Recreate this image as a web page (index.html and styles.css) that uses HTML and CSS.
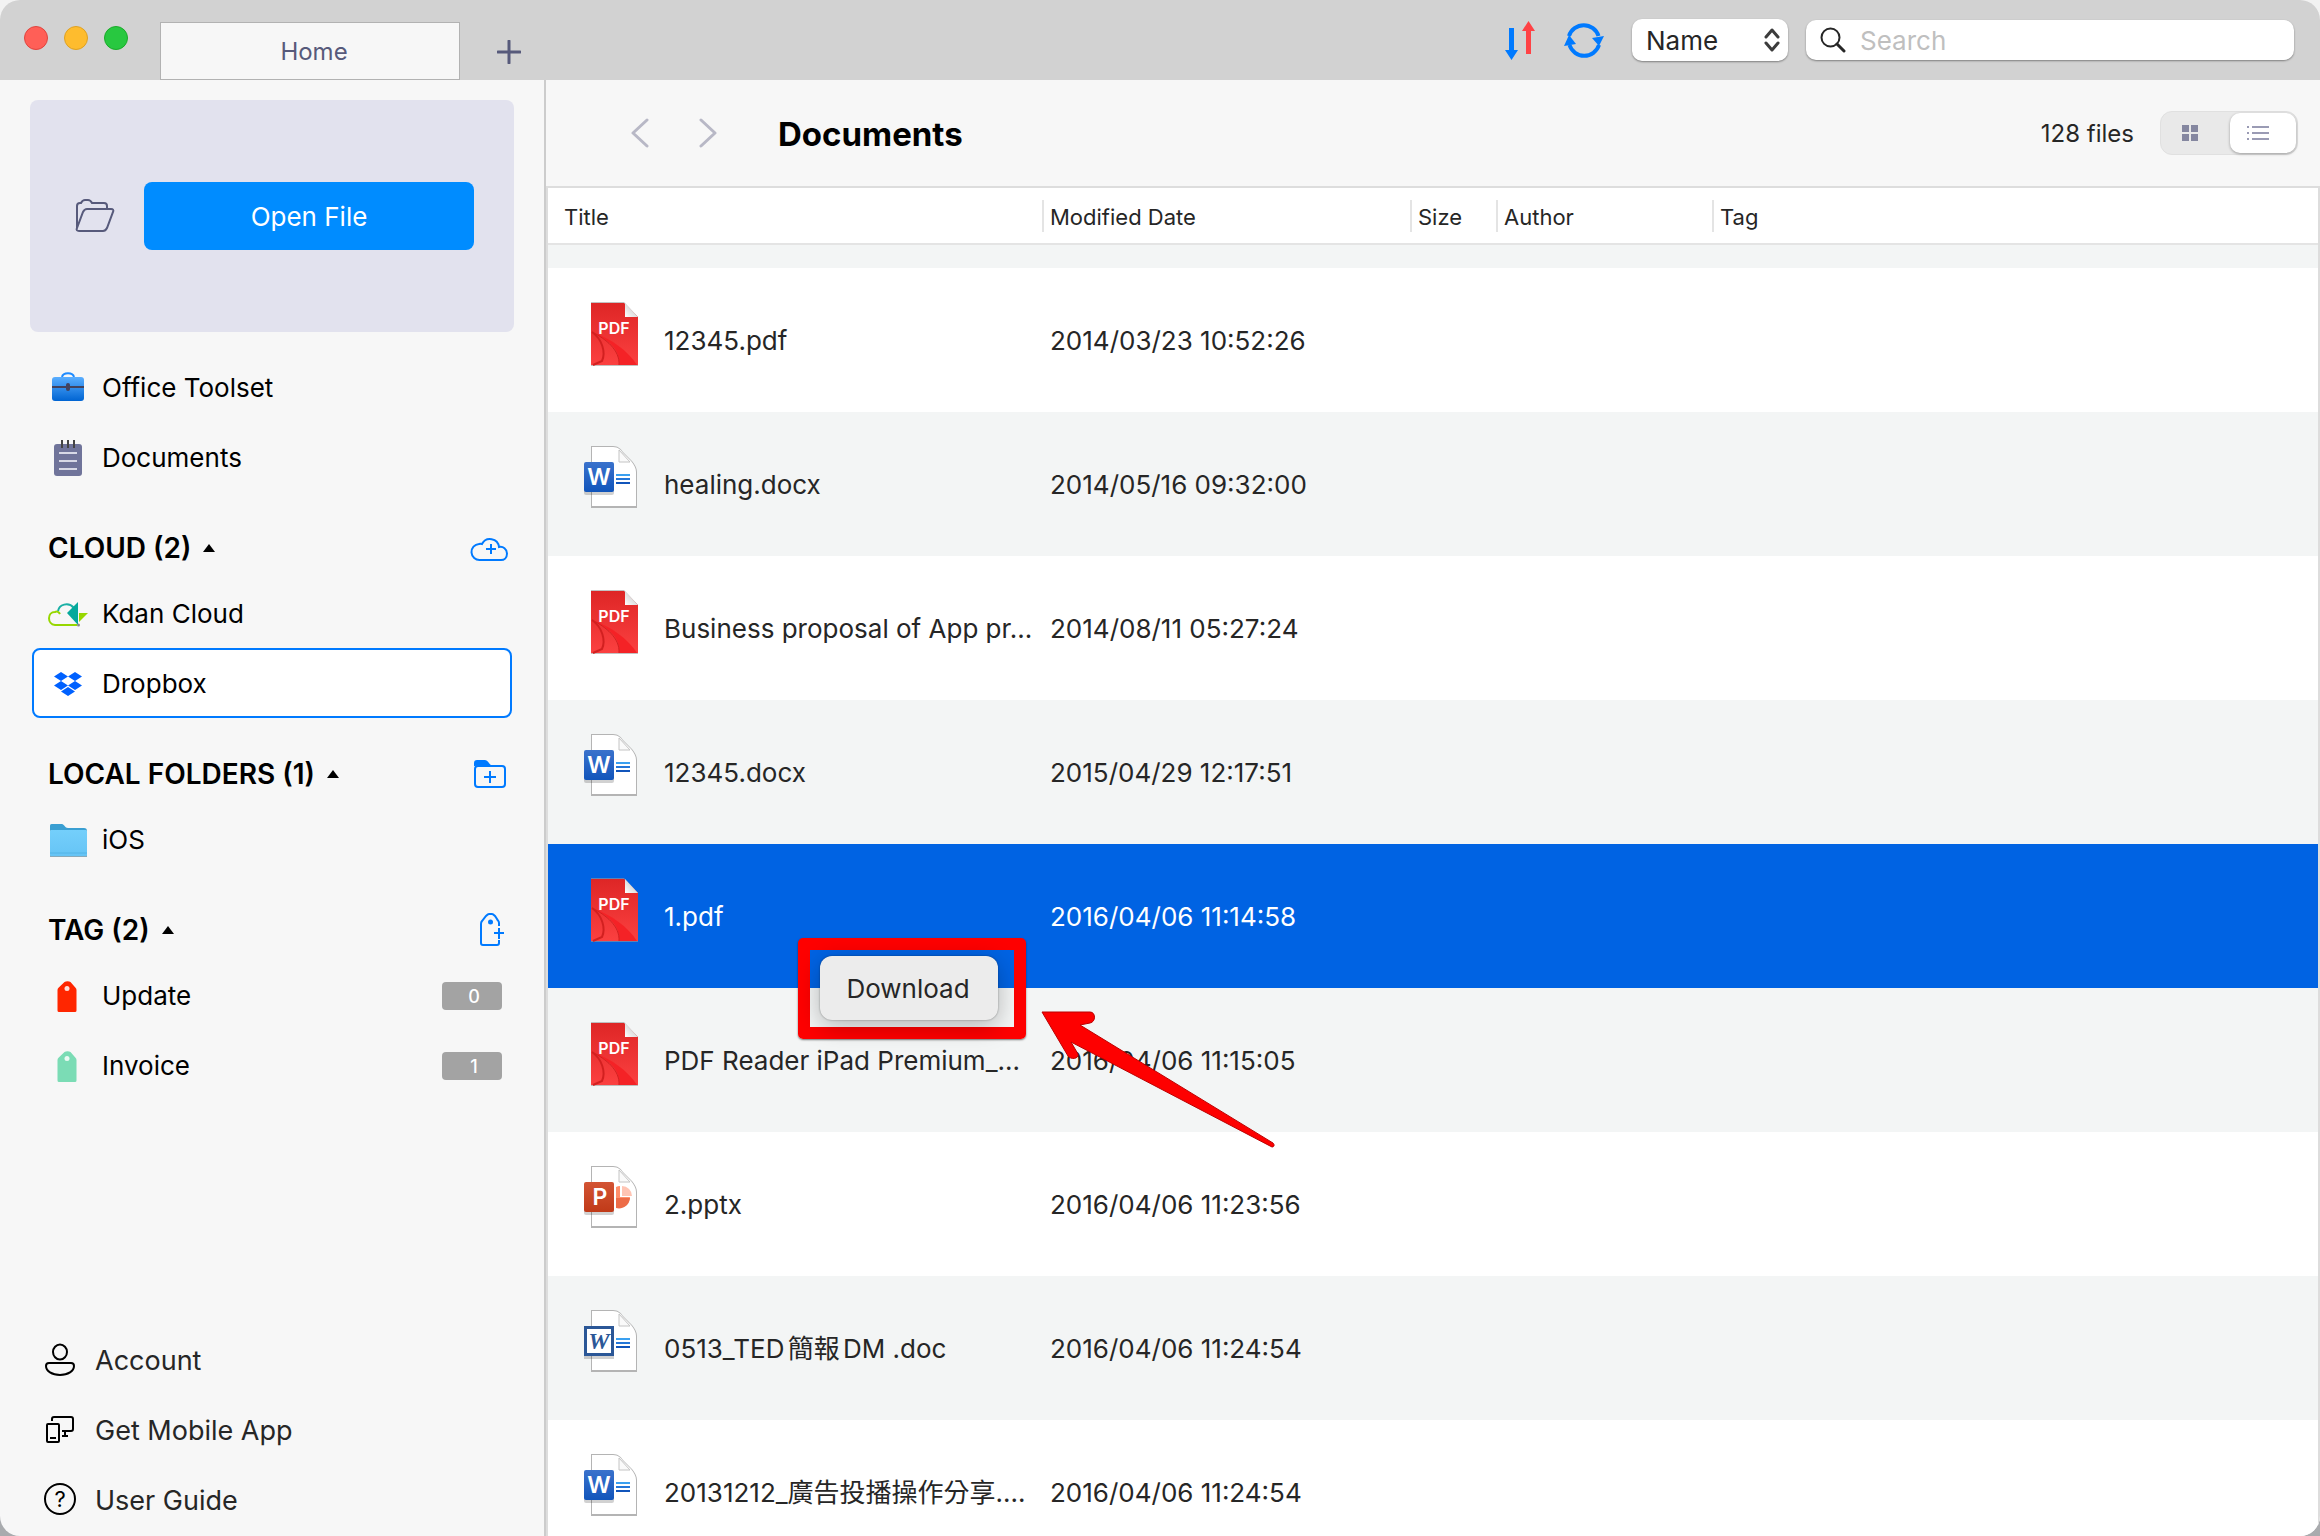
FILE: index.html
```html
<!DOCTYPE html>
<html lang="en">
<head>
<meta charset="utf-8">
<title>Documents</title>
<link rel="stylesheet" href="styles.css">
</head>
<body>
<svg class="defs" aria-hidden="true">
  <defs>
    <linearGradient id="g-case" x1="0" y1="0" x2="0" y2="1"><stop offset="0" stop-color="#5aaeff"/><stop offset="1" stop-color="#0064d2"/></linearGradient>
    <linearGradient id="g-pdf" x1="0" y1="0" x2="0" y2="1"><stop offset="0" stop-color="#de2626"/><stop offset="1" stop-color="#fb4040"/></linearGradient>
    <linearGradient id="g-word" x1="0" y1="0" x2="0" y2="1"><stop offset="0" stop-color="#3a72cc"/><stop offset="1" stop-color="#1155bb"/></linearGradient>
    <linearGradient id="g-ppt" x1="0" y1="0" x2="0" y2="1"><stop offset="0" stop-color="#d35434"/><stop offset="1" stop-color="#c03a18"/></linearGradient>
    <linearGradient id="g-folder" x1="0" y1="0" x2="0" y2="1"><stop offset="0" stop-color="#74cffb"/><stop offset="1" stop-color="#66c4f5"/></linearGradient>
    <linearGradient id="g-fold" x1="0" y1="1" x2="1" y2="0"><stop offset="0" stop-color="#fff"/><stop offset="1" stop-color="#bbb"/></linearGradient>
  </defs>
  <symbol id="i-pdf" viewBox="0 0 56 66">
    <path d="M9 1h33l14 15v49H9z" fill="#9a9a9a" opacity=".6"/>
    <path d="M9 2h33l14 14v48H9z" fill="url(#g-pdf)"/>
    <path d="M10 31c10 7 14 20 10 29l-9 4" fill="none" stroke="#d22020" stroke-width="2"/>
    <path d="M10 31c16 8 28 16 27 33h18C46 50 30 38 10 31z" fill="#f42226"/>
    <path d="M10 31c14 7 28 18 27 33" fill="none" stroke="#d22020" stroke-width="1"/>
    <path d="M43 2l13 14H43z" fill="url(#g-fold)"/>
  </symbol>
  <symbol id="i-page" viewBox="0 0 56 66">
    <path d="M9 2h22c5 0 8 3 10 6l9 9c3 4 5 7 5 11v36H9z" fill="#b4b4b4"/>
    <path d="M10 3h21c5 0 8 3 10 6l8 8c3 4 5 7 5 11v34H10z" fill="#fff"/>
    <path d="M37 6v12h11z" fill="#fafafa" stroke="#c4c4c4" stroke-width="1"/>
  </symbol>
  <symbol id="i-word" viewBox="0 1 56 66">
    <use href="#i-page"/>
    <rect x="2" y="20" width="30" height="31" rx="2" fill="#000" opacity=".18"/>
    <rect x="2" y="18" width="30" height="30" rx="2" fill="url(#g-word)"/>
    <path d="M34 31h14" stroke="#3aa0f0" stroke-width="2"/><path d="M34 35h14" stroke="#2477d8" stroke-width="2"/><path d="M34 39h14" stroke="#1155bb" stroke-width="2"/>
  </symbol>
  <symbol id="i-doc" viewBox="0 1 56 66">
    <use href="#i-page"/>
    <rect x="2" y="20" width="30" height="31" fill="#000" opacity=".18"/>
    <rect x="3.500" y="19.500" width="27" height="27" fill="#fff" stroke="#2b5797" stroke-width="3"/>
    <path d="M34 31h14" stroke="#3aa0f0" stroke-width="2"/><path d="M34 35h14" stroke="#2477d8" stroke-width="2"/><path d="M34 39h14" stroke="#1155bb" stroke-width="2"/>
  </symbol>
  <symbol id="i-ppt" viewBox="0 1 56 66">
    <use href="#i-page"/>
    <path d="M34 23a11 11 0 0 1 4-1v11h10A11 11 0 0 1 34 43z" fill="#ff8f6b"/>
    <path d="M34 34h14a11 11 0 0 1-14 10z" fill="#ed6c47"/>
    <path d="M40 22a10 10 0 0 1 10 10H40z" fill="#ffc4b3"/>
    <rect x="2" y="20" width="30" height="31" rx="2" fill="#000" opacity=".18"/>
    <rect x="2" y="18" width="30" height="30" rx="2" fill="url(#g-ppt)"/>
  </symbol>
  <symbol id="i-tag" viewBox="0 0 40 40">
    <path d="M11 36a1.500 1.500 0 0 1-1.500-1.500V14c0-1 .4-1.700 1-2.300l6-5.600c1.500-1.300 4.500-1.300 6 0l5 5.600c.6.600 1 1.300 1 2.300v20.500a1.500 1.500 0 0 1-1.500 1.500z" fill="currentColor"/>
    <circle cx="19" cy="12.500" r="2.500" fill="#fff" opacity=".85"/>
  </symbol>
</svg>

<div class="window">
  <header class="titlebar">
    <div class="lights">
      <button class="light light-close" aria-label="Close"></button>
      <button class="light light-min" aria-label="Minimize"></button>
      <button class="light light-max" aria-label="Zoom"></button>
    </div>
    <button class="tab">Home</button>
    <button class="icon-btn new-tab" aria-label="New tab">
      <svg width="24" height="24" viewBox="0 0 24 24"><path d="M12 1v22M1 12h22" stroke="#575a7b" stroke-width="3" stroke-linecap="round"/></svg>
    </button>
    <div class="tools">
      <button class="icon-btn" aria-label="Sort order">
        <svg width="32" height="40" viewBox="0 0 32 40"><path d="M5 8h5v22h4L7.500 40 1 30h4z" fill="#007aff"/><path d="M22 34h5V11h4L24.500 1 18 11h4z" fill="#ff4245"/></svg>
      </button>
      <button class="icon-btn" aria-label="Refresh">
        <svg width="40" height="40" viewBox="0 0 40 40"><path d="M5 16A15.500 15.500 0 0 1 34.500 16M35 25A15.500 15.500 0 0 1 5.500 25" fill="none" stroke="#007aff" stroke-width="4"/><path d="M28 18l12-2-5 10z" fill="#007aff"/><path d="M0 26l12-2-7-9z" fill="#007aff"/></svg>
      </button>
      <div class="sort">
        <select class="sort-select" aria-label="Sort by"><option>Name</option><option>Date</option></select>
        <svg class="sort-arrows" width="16" height="24" viewBox="0 0 16 24"><path d="M2 9l6-7 6 7M2 15l6 7 6-7" fill="none" stroke="#3c3c3c" stroke-width="3" stroke-linecap="round" stroke-linejoin="round"/></svg>
      </div>
      <label class="search">
        <svg width="26" height="26" viewBox="0 0 26 26"><circle cx="10.500" cy="10.500" r="9" fill="none" stroke="#262626" stroke-width="2"/><path d="M17 17l7 7" stroke="#262626" stroke-width="3" stroke-linecap="round"/></svg>
        <input class="search-input" type="text" placeholder="Search" aria-label="Search">
      </label>
    </div>
  </header>

  <div class="body">
    <aside class="sidebar">
      <div class="open-panel">
        <svg width="40" height="34" viewBox="0 0 40 34"><path d="M2 29V7c0-2 1-3 3-3h1c1-2 2-3 4-3h3c2 0 3 1 4 3h12c2 0 3 1 3 3v3M2 29L8 13c1-2 2-3 4-3h24c2 0 3 1 2 3l-6 16c-1 2-2 3-4 3H4c-2 0-3-1-2-3z" fill="none" stroke="#575a7b" stroke-width="2"/></svg>
        <button class="open-btn">Open File</button>
      </div>

      <nav class="group">
        <a class="item" href="#">
          <svg width="40" height="40" viewBox="0 0 40 40"><path d="M14 9c1-5 11-5 12 0" fill="none" stroke="#1e8bff" stroke-width="2"/><rect x="4" y="9" width="32" height="24" rx="3" fill="url(#g-case)"/><path d="M4 19h32" stroke="#42425e" stroke-width="2"/><rect x="18" y="15" width="4" height="8" rx="2" fill="#42425e"/></svg>
          <span>Office Toolset</span>
        </a>
        <a class="item" href="#">
          <svg width="40" height="40" viewBox="0 0 40 40"><rect x="6" y="6" width="28" height="32" rx="3" fill="#70749a"/><path d="M14 2v8M20 2v8M26 2v8" stroke="#444" stroke-width="2"/><path d="M11 15h18M11 23h18M11 31h18" stroke="#d8d9e6" stroke-width="2"/></svg>
          <span>Documents</span>
        </a>
      </nav>

      <section class="group">
        <div class="head">
          <button class="head-btn">CLOUD (2)<svg width="12" height="8" viewBox="0 0 12 8"><path d="M6 0l6 8H0z"/></svg></button>
          <button class="icon-btn add" aria-label="Add cloud">
            <svg width="40" height="36" viewBox="0 0 40 36"><path d="M10 30a8 8 0 0 1-1-16 4 4 0 0 1 3 0 9 9 0 0 1 17 3c4-1 8 2 8 6.500S34 30 31 30zM21 14v10M16 19h10" fill="none" stroke="#007aff" stroke-width="2"/></svg>
          </button>
        </div>
        <a class="item" href="#">
          <svg width="40" height="40" viewBox="0 0 40 40"><path d="M10 17c1-6 10-10 16-3" fill="none" stroke="#1ab0a5" stroke-width="2"/><path d="M29 31H7C-1 30-1 18 7 18c2-1 4 0 5 2" fill="none" stroke="#97d700" stroke-width="2"/><path d="M30 8v23L19 19z" fill="#06a99c"/><path d="M31 19h9l-9 9z" fill="#97d700"/><circle cx="30.500" cy="31" r="1.500" fill="#888"/></svg>
          <span>Kdan Cloud</span>
        </a>
        <a class="item item-active" href="#">
          <svg width="40" height="40" viewBox="0 0 40 40"><path d="M13 8l7 4.500-7 4.500-7-4.500zM27 8l7 4.500-7 4.500-7-4.500zM13 17l7 4.500-7 4.500-7-4.500zM27 17l7 4.500-7 4.500-7-4.500zM20 23l7 4.500-7 4.500-7-4.500z" fill="#0061ff"/></svg>
          <span>Dropbox</span>
        </a>
      </section>

      <section class="group">
        <div class="head">
          <button class="head-btn">LOCAL FOLDERS (1)<svg width="12" height="8" viewBox="0 0 12 8"><path d="M6 0l6 8H0z"/></svg></button>
          <button class="icon-btn add" aria-label="Add folder">
            <svg width="40" height="36" viewBox="0 0 40 36"><path d="M4 10V7c0-2 1-3 3-3h8c3 0 4 4 6 5z" fill="#007aff"/><rect x="5" y="10" width="30" height="21" rx="3" fill="none" stroke="#007aff" stroke-width="2"/><path d="M20 15v12M14 21h12" stroke="#007aff" stroke-width="2"/></svg>
          </button>
        </div>
        <a class="item" href="#">
          <svg width="40" height="40" viewBox="0 0 40 40"><path d="M2 10V6c0-2 1-2 3-2h9c2 0 3 4 6 4h16c2 0 3 1 3 3v6H2z" fill="#3a9fd2"/><path d="M2 37V11c0-1 1-1 2-1h33c1 0 2 0 2 1v26z" fill="#8aa9b8"/><path d="M2 35V11c0-1 1-1 2-1h33c1 0 2 0 2 1v24c0 1-1 1-2 1H4c-1 0-2 0-2-1z" fill="url(#g-folder)"/><path d="M2 33h37" stroke="#52b4e6" stroke-width="1"/></svg>
          <span>iOS</span>
        </a>
      </section>

      <section class="group">
        <div class="head">
          <button class="head-btn">TAG (2)<svg width="12" height="8" viewBox="0 0 12 8"><path d="M6 0l6 8H0z"/></svg></button>
          <button class="icon-btn add" aria-label="Add tag">
            <svg width="40" height="36" viewBox="0 0 40 36"><path d="M29 14v-3c0-2-1-2-2-4l-2-3c-1-1-2-2-3-2h-3c-1 0-2 1-3 2l-4 5c-1 1-1 1-1 3v19c0 1 1 2 2 2h14c1 0 2-1 2-2v-3M29 16v11M24 21h10" fill="none" stroke="#007aff" stroke-width="2"/><circle cx="20.500" cy="10" r="2.500" fill="#007aff"/></svg>
          </button>
        </div>
        <a class="item" href="#">
          <svg class="tag-red" width="40" height="40"><use href="#i-tag"/></svg>
          <span>Update</span><span class="badge">0</span>
        </a>
        <a class="item" href="#">
          <svg class="tag-green" width="40" height="40"><use href="#i-tag"/></svg>
          <span>Invoice</span><span class="badge">1</span>
        </a>
      </section>

      <nav class="footer">
        <a class="foot-item" href="#">
          <svg width="34" height="36" viewBox="0 0 34 36"><ellipse cx="17" cy="9" rx="7" ry="7.500" fill="none" stroke="#000" stroke-width="2"/><path d="M6 20h22c2 0 3 1 3 3 0 5-6 9-14 9S3 28 3 23c0-2 1-3 3-3z" fill="none" stroke="#000" stroke-width="2"/></svg>
          <span>Account</span>
        </a>
        <a class="foot-item" href="#">
          <svg width="34" height="36" viewBox="0 0 34 36"><rect x="4" y="11" width="12" height="18" rx="1" fill="none" stroke="#000" stroke-width="2"/><path d="M9 8V6c0-1 1-2 2-2h17c1 0 2 1 2 2v10c0 1-1 2-2 2h-9M22 18v5M19 23h6M7 25h6" fill="none" stroke="#000" stroke-width="2"/></svg>
          <span>Get Mobile App</span>
        </a>
        <a class="foot-item" href="#">
          <svg width="34" height="36" viewBox="0 0 34 36"><circle cx="17" cy="16" r="15" fill="none" stroke="#000" stroke-width="2"/><text x="17" y="24" text-anchor="middle" class="glyph glyph-help">?</text></svg>
          <span>User Guide</span>
        </a>
      </nav>
    </aside>

    <main class="main">
      <div class="main-head">
        <button class="icon-btn" aria-label="Back"><svg width="20" height="30" viewBox="0 0 20 30"><path d="M17 2L3 15l14 13" fill="none" stroke="#b8b8c6" stroke-width="3" stroke-linecap="round" stroke-linejoin="round"/></svg></button>
        <button class="icon-btn" aria-label="Forward"><svg width="20" height="30" viewBox="0 0 20 30"><path d="M3 2l14 13L3 28" fill="none" stroke="#b8b8c6" stroke-width="3" stroke-linecap="round" stroke-linejoin="round"/></svg></button>
        <h1 class="title">Documents</h1>
        <span class="count">128 files</span>
        <div class="views">
          <button class="view" aria-label="Grid view"><svg width="16" height="16" viewBox="0 0 16 16"><path d="M0 0h7v7H0zM9 0h7v7H9zM0 9h7v7H0zM9 9h7v7H9z" fill="#8587a0"/></svg></button>
          <button class="view view-on" aria-label="List view"><svg width="22" height="16" viewBox="0 0 22 16"><path d="M5 2h17M5 8h17M5 14h17M0 2h2M0 8h2M0 14h2" stroke="#9a9bb4" stroke-width="2"/></svg></button>
        </div>
      </div>

      <div class="list">
        <table class="files">
          <colgroup><col class="c-title"><col class="c-date"><col class="c-size"><col class="c-author"><col></colgroup>
          <thead>
            <tr><th>Title</th><th>Modified Date</th><th>Size</th><th>Author</th><th>Tag</th></tr>
          </thead>
          <tbody>
            <tr class="row-cut"><td colspan="5"></td></tr>
            <tr><td><div class="file"><svg width="56" height="66"><use href="#i-pdf"/><text x="32" y="33" text-anchor="middle" class="glyph glyph-pdf">PDF</text></svg><span>12345.pdf</span></div></td><td>2014/03/23 10:52:26</td><td></td><td></td><td></td></tr>
            <tr><td><div class="file"><svg width="56" height="66"><use href="#i-word"/><text x="17" y="40" text-anchor="middle" class="glyph glyph-app">W</text></svg><span>healing.docx</span></div></td><td>2014/05/16 09:32:00</td><td></td><td></td><td></td></tr>
            <tr><td><div class="file"><svg width="56" height="66"><use href="#i-pdf"/><text x="32" y="33" text-anchor="middle" class="glyph glyph-pdf">PDF</text></svg><span>Business proposal of App pr...</span></div></td><td>2014/08/11 05:27:24</td><td></td><td></td><td></td></tr>
            <tr><td><div class="file"><svg width="56" height="66"><use href="#i-word"/><text x="17" y="40" text-anchor="middle" class="glyph glyph-app">W</text></svg><span>12345.docx</span></div></td><td>2015/04/29 12:17:51</td><td></td><td></td><td></td></tr>
            <tr class="selected"><td><div class="file"><svg width="56" height="66"><use href="#i-pdf"/><text x="32" y="33" text-anchor="middle" class="glyph glyph-pdf">PDF</text></svg><span>1.pdf</span></div></td><td>2016/04/06 11:14:58</td><td></td><td></td><td></td></tr>
            <tr><td><div class="file"><svg width="56" height="66"><use href="#i-pdf"/><text x="32" y="33" text-anchor="middle" class="glyph glyph-pdf">PDF</text></svg><span>PDF Reader iPad Premium_...</span></div></td><td>2016/04/06 11:15:05</td><td></td><td></td><td></td></tr>
            <tr><td><div class="file"><svg width="56" height="66"><use href="#i-ppt"/><text x="18" y="40" text-anchor="middle" class="glyph glyph-app">P</text></svg><span>2.pptx</span></div></td><td>2016/04/06 11:23:56</td><td></td><td></td><td></td></tr>
            <tr><td><div class="file"><svg width="56" height="66"><use href="#i-doc"/><text x="17" y="40" text-anchor="middle" class="glyph glyph-doc">W</text></svg><span>0513_TED簡報DM .doc</span></div></td><td>2016/04/06 11:24:54</td><td></td><td></td><td></td></tr>
            <tr><td><div class="file"><svg width="56" height="66"><use href="#i-word"/><text x="17" y="40" text-anchor="middle" class="glyph glyph-app">W</text></svg><span>20131212_廣告投播操作分享....</span></div></td><td>2016/04/06 11:24:54</td><td></td><td></td><td></td></tr>
          </tbody>
        </table>
        <div class="callout">
          <button class="menu-item">Download</button>
        </div>
        <svg class="arrow" width="240" height="142" viewBox="0 0 240 142"><path d="M2 2h48c6 0 6 10 0 11l-10 2L233 133c2 2 1 4-1 4L31 32l7 12c1 5-7 6-10 2z" fill="#fe0000" stroke="#b00" stroke-width="1"/></svg>
      </div>
    </main>
  </div>
</div>
</body>
</html>
```

FILE: styles.css
```css
* { box-sizing: border-box; }

body {
  margin: 0;
  background: linear-gradient(#f2f2f2 50%, #a9abae 50%);
  font-family: Inter, "Noto Sans CJK TC", sans-serif;
  font-size: 26px;
  line-height: 32px;
  color: #262626;
  text-autospace: normal;
}

button, input, select { font: inherit; color: inherit; }
button { border: 0; padding: 0; background: none; }
a { color: inherit; text-decoration: none; }
svg { display: block; flex: none; }

.defs { position: absolute; width: 0; height: 0; }
.glyph { font-family: Inter, sans-serif; font-weight: 600; fill: #fff; }
.glyph-pdf { font-size: 16px; }
.glyph-app { font-size: 23px; }
.glyph-doc { font-family: "Liberation Serif", serif; font-size: 24px; font-weight: 700; font-style: italic; fill: #2b5797; }
.glyph-help { font-size: 22px; font-weight: 400; fill: #000; }

.window {
  display: flex;
  flex-direction: column;
  height: 100vh;
  overflow: hidden;
  border-radius: 20px;
  background: #f7f7f7;
}

/* Title bar */
.titlebar {
  display: flex;
  align-items: flex-end;
  flex: none;
  height: 80px;
  padding: 0 26px 0 24px;
  background: #d2d2d2;
}
.lights { display: flex; gap: 16px; width: 136px; padding-bottom: 30px; }
.light { width: 24px; height: 24px; border-radius: 50%; border: 1px solid; }
.light-close { background: #ff5f57; border-color: #e0443e; }
.light-min { background: #febc2e; border-color: #dea123; }
.light-max { background: #28c840; border-color: #1aab29; }
.tab {
  width: 300px;
  height: 58px;
  padding: 2px 0 0 8px;
  border: 1px solid #b2b2b2;
  background: #f7f7f7;
  color: #575a7b;
  font-size: 24px;
}
.icon-btn { display: flex; align-items: center; justify-content: center; }
.new-tab { margin: 0 0 16px 37px; }
.tools {
  display: flex;
  align-items: center;
  align-self: stretch;
  flex: 1;
  justify-content: flex-end;
  gap: 28px;
}
.sort, .search {
  border-radius: 10px;
  background: #fff;
  box-shadow: 0 1px 2px #0006;
}
.sort { display: grid; align-items: center; width: 156px; height: 42px; }
.sort-select {
  grid-area: 1 / 1;
  width: 100%;
  height: 42px;
  padding: 2px 14px 0;
  border: 0;
  appearance: none;
  background: none;
}
.sort-arrows { grid-area: 1 / 1; justify-self: end; margin-right: 8px; pointer-events: none; }
.search {
  display: flex;
  align-items: center;
  gap: 14px;
  width: 488px;
  height: 40px;
  margin-left: -10px;
  padding: 0 14px;
}
.search-input { flex: 1; min-width: 0; padding: 2px 0 0; border: 0; outline: 0; background: none; }
.search-input::placeholder { color: #bfbfbf; opacity: 1; }

/* Sidebar */
.body { display: flex; flex: 1; min-height: 0; }
.sidebar {
  display: flex;
  flex-direction: column;
  flex: none;
  width: 546px;
  padding: 20px 30px 0 30px;
  border-right: 2px solid #ccc;
  color: #000;
}
.open-panel {
  display: flex;
  align-items: center;
  justify-content: space-between;
  height: 232px;
  margin-bottom: 20px;
  padding: 0 40px 0 45px;
  border-radius: 8px;
  background: #e2e2ee;
}
.open-btn { width: 330px; height: 68px; padding-top: 2px; border-radius: 8px; background: #008cff; color: #fff; }
.group { margin: 0 2px 24px 2px; }
.item {
  display: flex;
  align-items: center;
  gap: 14px;
  height: 70px;
  padding: 2px 8px 0 14px;
  border: 2px solid transparent;
  border-radius: 8px;
}
.item-active { border-color: #007aff; background: #fff; }
.badge {
  width: 60px;
  height: 28px;
  margin-left: auto;
  padding-left: 4px;
  border-radius: 4px;
  background: #a3a3a3;
  color: #fff;
  font-size: 18px;
  line-height: 30px;
  font-weight: 500;
  text-align: center;
}
.head { display: flex; align-items: center; justify-content: space-between; height: 62px; padding: 2px 2px 0 16px; }
.head-btn { display: flex; align-items: center; gap: 12px; font-size: 28px; font-weight: 600; }
.tag-red { color: #ff2600; }
.tag-green { color: #7bdcb5; }
.footer { margin-top: auto; color: #262626; }
.foot-item { display: flex; align-items: center; gap: 18px; height: 70px; padding-left: 13px; font-size: 27px; }

/* Main area */
.main { display: flex; flex-direction: column; flex: 1; min-width: 0; }
.main-head {
  display: flex;
  align-items: center;
  flex: none;
  gap: 48px;
  height: 106px;
  padding: 0 22px 0 84px;
}
.title { margin: 0 auto 0 12px; padding-top: 2px; font-size: 33px; font-weight: 700; color: #000; }
.count { margin-right: -22px; padding-top: 2px; font-size: 24px; }
.views { display: flex; width: 138px; height: 44px; padding: 1px; border: 1px solid #e0e0e0; border-radius: 12px; background: #e9e9e9; }
.view { display: flex; flex: 1; align-items: center; justify-content: center; padding-right: 12px; border-radius: 10px; }
.view-on { padding-right: 10px; background: #fff; box-shadow: 0 1px 3px #0005; }

.list {
  position: relative;
  flex: 1;
  min-height: 0;
  overflow: hidden;
  border: 2px solid #ddd;
  border-bottom: 0;
  background: #fff;
}
.files { width: 100%; border-collapse: collapse; table-layout: fixed; }
.c-title { width: 496px; }
.c-date { width: 368px; }
.c-size { width: 86px; }
.c-author { width: 216px; }
.files th {
  height: 56px;
  padding: 2px 0 0 6px;
  border-bottom: 2px solid #e4e4e4;
  background: linear-gradient(#e4e4e4, #e4e4e4) right 0 top 12px / 2px 32px no-repeat;
  font-size: 22px;
  font-weight: 400;
  text-align: left;
}
.files th:first-child { padding-left: 16px; }
.files th:last-child { background: none; }
.files td { height: 144px; padding: 2px 0 0 6px; white-space: nowrap; }
.files .row-cut td { height: 24px; padding: 0; }
.files tbody tr:nth-child(odd) { background: #f3f5f5; }
.file { display: flex; align-items: center; gap: 26px; padding-left: 28px; }
.file svg { margin-top: -14px; }
.files tbody .selected { background: #0063e3; color: #fff; }

/* Context menu with highlight */
.callout {
  position: absolute;
  left: 250px;
  top: 750px;
  padding: 6px 16px 7px 10px;
  border: 12px solid #fe0000;
  border-radius: 5px;
  box-shadow: 0 1px 2px #0008;
}
.menu-item {
  display: block;
  width: 178px;
  height: 64px;
  padding: 2px 2px 0 0;
  border-radius: 12px;
  background: #ececec;
  box-shadow: 0 0 2px #0006, 0 6px 24px #0004;
}
.arrow { position: absolute; left: 492px; top: 822px; }
```
